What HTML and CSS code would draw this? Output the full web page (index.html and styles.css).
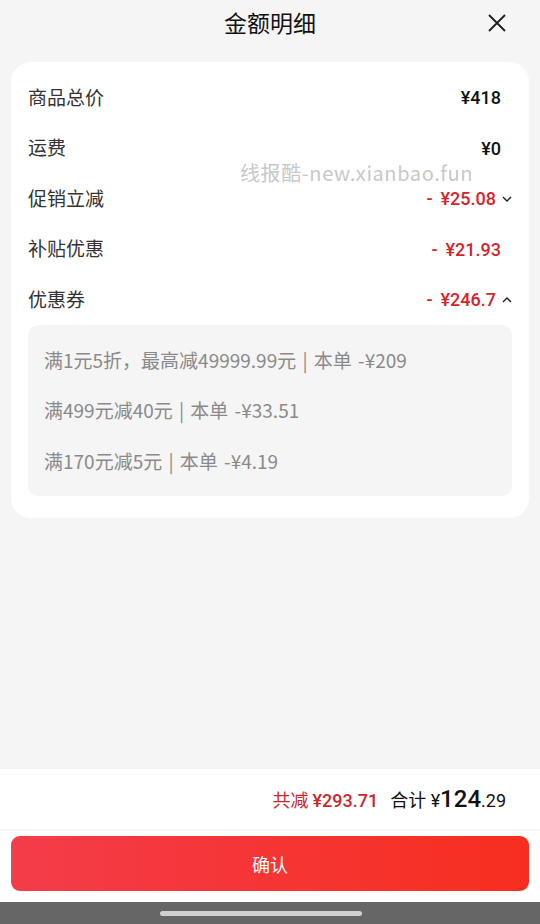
FILE: index.html
```html
<!DOCTYPE html>
<html>
<head>
    <meta charset="UTF-8">
    <meta name="viewport" content="width=device-width, initial-scale=1, maximum-scale=1">
    <title>金额明细</title>
    <link rel="stylesheet" href="styles.css">
</head>
<body>
<div class="page">
    <div class="header">
        <p class="main_title">金额明细</p>
        <svg class="close" width="20" height="20" viewBox="0 0 20 20">
            <path d="M2 2L18 18M18 2L2 18" stroke="#1d1d1d" stroke-width="1.8" fill="none"/>
        </svg>
    </div>

    <div class="content">
        <div class="card">
            <div class="row">
                <span class="label">商品总价</span>
                <span class="value">¥418</span>
            </div>
            <div class="row">
                <span class="label">运费</span>
                <span class="value">¥0</span>
            </div>
            <div class="row">
                <span class="label">促销立减</span>
                <span class="value red"><i class="minus">-</i>¥25.08
                    <svg class="arrow" width="10" height="8" viewBox="0 0 10 8"><path d="M1 2L5 6L9 2" stroke="#1d1d1d" stroke-width="1.4" fill="none"/></svg>
                </span>
            </div>
            <div class="row">
                <span class="label">补贴优惠</span>
                <span class="value red"><i class="minus">-</i>¥21.93</span>
            </div>
            <div class="row">
                <span class="label">优惠券</span>
                <span class="value red"><i class="minus">-</i>¥246.7
                    <svg class="arrow" width="10" height="8" viewBox="0 0 10 8"><path d="M1 6L5 2L9 6" stroke="#1d1d1d" stroke-width="1.4" fill="none"/></svg>
                </span>
            </div>
            <div class="coupon_box">
                <p class="coupon">满1元5折，最高减49999.99元 | 本单 -¥209</p>
                <p class="coupon">满499元减40元 | 本单 -¥33.51</p>
                <p class="coupon">满170元减5元 | 本单 -¥4.19</p>
            </div>
            <span class="watermark">线报酷-new.xianbao.fun</span>
        </div>
    </div>

    <div class="summary">
        <span class="save">共减 <b>¥293.71</b></span>
        <span class="total">合计 ¥<b class="big">124</b>.29</span>
    </div>
    <div class="btn_area">
        <div class="btn">确认</div>
    </div>
    <div class="nav_bar">
        <div class="indicator"></div>
    </div>
</div>
</body>
</html>
```

FILE: styles.css
```css
html, body {
    margin: 0;
    padding: 0;
}
body {
    font-family: "Noto Sans CJK SC", "Noto Sans", sans-serif;
    color: #1d1d1d;
    background: #f5f5f5;
}
p {
    margin: 0;
}
.page {
    width: 540px;
    height: 924px;
    display: flex;
    flex-direction: column;
}
.header {
    height: 62px;
    flex: none;
    display: flex;
    justify-content: center;
    position: relative;
}
.main_title {
    font-size: 23px;
    line-height: 44px;
    color: #111;
}
.close {
    position: absolute;
    right: 33px;
    top: 13px;
}
.content {
    flex: 1;
    padding: 0 11px;
}
.card {
    background: #fff;
    border-radius: 20px;
    padding: 9px 28px 22px 17px;
    position: relative;
}
.row {
    height: 50.5px;
    display: flex;
    align-items: center;
    justify-content: space-between;
}
.row .value {
    padding-top: 4px;
}
.label {
    font-size: 19px;
    color: #333;
}
.value {
    font-family: Roboto, "Noto Sans", sans-serif;
    font-size: 18px;
    line-height: 20px;
    font-weight: 500;
    color: #111;
    display: flex;
    align-items: center;
}
.minus {
    font-style: normal;
    margin-right: 8px;
}
.red {
    color: #d4242c;
}
.arrow {
    margin-left: 6px;
    margin-right: -11px;
}
.coupon_box {
    background: #f5f5f5;
    border-radius: 10px;
    padding: 10px 16px;
    margin: 1px -11px 0 0;
}
.coupon {
    height: 50.5px;
    line-height: 50px;
    font-size: 19px;
    color: #8a8a8a;
    word-spacing: 2px;
}
.watermark {
    position: absolute;
    left: 229px;
    top: 102px;
    font-size: 20px;
    line-height: 18px;
    color: #c8c8c8;
    letter-spacing: 0.6px;
}
.summary {
    height: 60px;
    flex: none;
    background: #fff;
    border-bottom: 2px solid #f5f5f5;
    display: flex;
    justify-content: flex-end;
    align-items: center;
    padding-right: 34px;
    font-size: 18px;
}
.summary b {
    font-family: Roboto, "Noto Sans", sans-serif;
    font-weight: 500;
}
.save {
    color: #c9282e;
    margin-right: 12px;
}
.total {
    color: #111;
    font-family: Roboto, "Noto Sans CJK SC", sans-serif;
}
.total .big {
    font-size: 24px;
}
.btn_area {
    height: 71px;
    flex: none;
    background: #fff;
    padding: 5px 11px 0;
    box-sizing: border-box;
}
.btn {
    height: 55px;
    border-radius: 9px;
    background: linear-gradient(90deg, #f43c4a, #f72e1f);
    color: #fff;
    font-size: 18px;
    display: flex;
    align-items: center;
    justify-content: center;
}
.nav_bar {
    height: 22px;
    flex: none;
    background: #666;
    display: flex;
    justify-content: center;
    align-items: center;
}
.indicator {
    width: 202px;
    height: 5px;
    border-radius: 3px;
    background: #d0d0d0;
    margin-right: 18px;
}
```
